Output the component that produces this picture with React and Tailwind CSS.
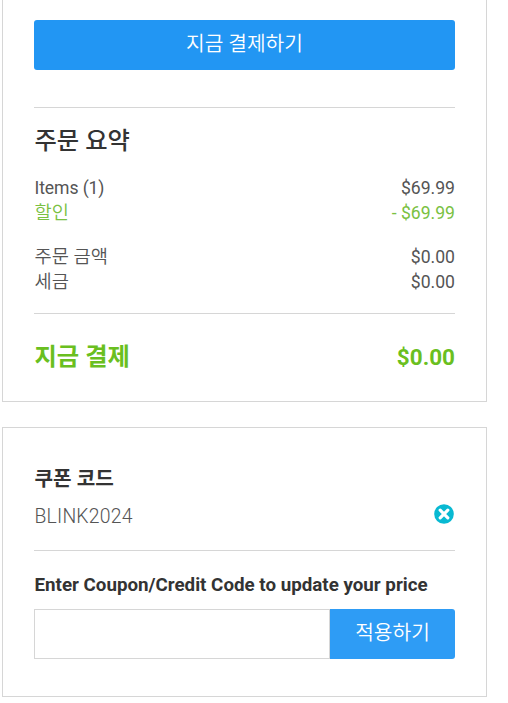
import React from 'react';

function Row({ label, value, labelClass = 'text-[18.7px] font-[350]', className = '' }) {
  return (
    <div className={`flex h-[25px] items-center justify-between pl-[0.5px] leading-[25px] ${className}`}>
      <span className={labelClass}>{label}</span>
      <span className="text-[17.6px]">{value}</span>
    </div>
  );
}

export default function App() {
  return (
    <main className="h-[703px] w-[508px] overflow-hidden bg-white pl-[2px] font-[Roboto,'Noto_Sans_CJK_KR',sans-serif] text-[#555]">
      <section className="h-[402px] w-[485px] border border-t-0 border-[#d6d6d6] px-[31px] pt-5">
        <button className="flex h-[50px] w-full items-center justify-center rounded-[3px] bg-[#2296f3] pb-px text-[20.3px] font-[350] text-white">
          지금 결제하기
        </button>
        <div className="mt-[37px] border-t border-[#d6d6d6] pt-[15px]">
          <h2 className="h-9 pl-[0.5px] text-[24.3px] font-medium leading-9 text-[#333]">주문 요약</h2>
          <div className="mt-[17px]">
            <Row label="Items (1)" value="$69.99" labelClass="text-[17.6px] tracking-[-0.1px]" />
            <Row label="할인" value="- $69.99" className="text-[#7ac142]" />
          </div>
          <div className="mt-[19px]">
            <Row label="주문 금액" value="$0.00" />
            <Row label="세금" value="$0.00" />
          </div>
        </div>
        <div className="mt-[18px] flex items-center justify-between border-t border-[#d6d6d6] pl-[0.5px] pt-6 leading-9 text-[#6abf20]">
          <span className="text-[24.3px] font-bold">지금 결제</span>
          <span className="pt-px text-[22.5px] font-bold">$0.00</span>
        </div>
      </section>
      <section className="mt-[25px] h-[270px] w-[485px] border border-[#d6d6d6] px-[31px] pt-[37px]">
        <h3 className="h-7 pl-[0.5px] text-[20.2px] font-bold leading-7 text-[#333]">쿠폰 코드</h3>
        <div className="flex h-[58px] items-start justify-between border-b border-[#d6d6d6] pt-[10px] font-light leading-7">
          <span className="pl-[0.5px] text-[19.4px] tracking-[0.2px]">BLINK2024</span>
          <svg viewBox="0 0 20 20" className="mr-[1px] mt-px size-5">
            <circle cx="10" cy="10" r="9.8" fill="#08b9d2" />
            <path d="M6.2 6.2l7.6 7.6M13.8 6.2l-7.6 7.6" stroke="white" strokeWidth="3.2" strokeLinecap="round" />
          </svg>
        </div>
        <label className="mt-5 block h-7 whitespace-nowrap pl-[0.5px] text-[18.75px] font-bold leading-7 text-[#333]">
          Enter Coupon/Credit Code to update your price
        </label>
        <div className="mt-[10px] flex h-[50px]">
          <input aria-label="쿠폰 코드" className="w-[296px] border border-[#d6d6d6] outline-none" />
          <button className="flex-1 rounded-r-[3px] bg-[#2e9cf5] pb-px text-[20.3px] font-[350] text-white">적용하기</button>
        </div>
      </section>
    </main>
  );
}
